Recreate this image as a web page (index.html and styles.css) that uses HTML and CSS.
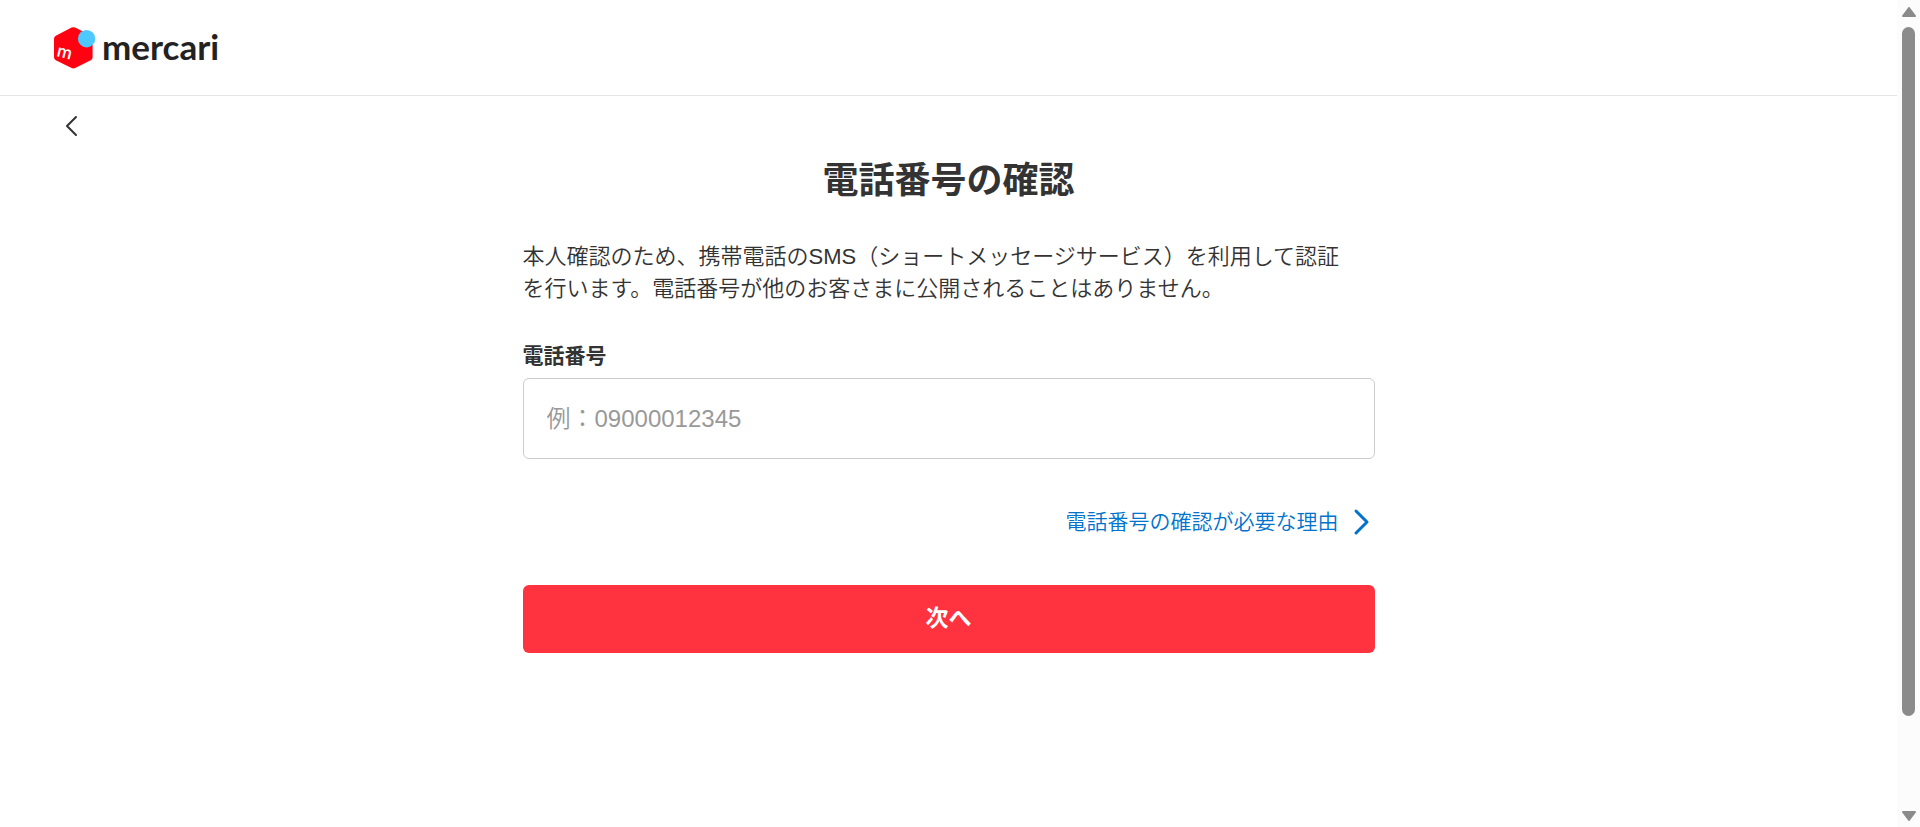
FILE: index.html
```html
<!DOCTYPE html>
<html lang="ja">
<head>
    <meta charset="UTF-8">
    <meta name="viewport" content="width=device-width, initial-scale=1.0">
    <title>電話番号の確認 - mercari</title>
    <link rel="stylesheet" href="styles.css">
</head>
<body>
    <div class="page">
        <header class="header">
            <a href="#" class="logo">
                <svg class="logo-mark" viewBox="0 0 42 42" aria-hidden="true">
                    <path fill="#ff0211" d="M17.6 0.6a4 4 0 0 1 3.6 0l15.6 8.2a3.2 3.2 0 0 1 1.8 2.9v18.6a3.2 3.2 0 0 1-1.8 2.9l-15.6 7.8a4 4 0 0 1-3.6 0L1.8 33.2A3.2 3.2 0 0 1 0 30.3V11.7a3.2 3.2 0 0 1 1.8-2.9z"/>
                    <circle cx="32.6" cy="11.7" r="8.7" fill="#4dc9ff"/>
                    <text class="logo-letter" x="2" y="29" transform="rotate(14 2 29)">m</text>
                </svg>
                <span class="logo-name">mercari</span>
            </a>
        </header>

        <nav class="back">
            <a href="#" class="back-link" aria-label="戻る">
                <svg class="back-icon" viewBox="0 0 24 24" aria-hidden="true">
                    <path d="M16 3L7 12l9 9"/>
                </svg>
            </a>
        </nav>

        <main class="content">
            <h1 class="title">電話番号の確認</h1>
            <p class="lead">本人確認のため、携帯電話のSMS（ショートメッセージサービス）を利用して認証<br>を行います。電話番号が他のお客さまに公開されることはありません。</p>
            <form class="form">
                <label class="label" for="phone">電話番号</label>
                <input class="input" id="phone" type="tel" placeholder="例：09000012345">
                <a href="#" class="reason">
                    電話番号の確認が必要な理由
                    <svg class="reason-icon" viewBox="0 0 28 28" aria-hidden="true">
                        <path d="M9 3l11 11L9 25"/>
                    </svg>
                </a>
                <button class="submit" type="button">次へ</button>
            </form>
        </main>
    </div>

    <div class="scrollbar" aria-hidden="true">
        <svg class="scroll-arrow" viewBox="0 0 14 10">
            <path d="M7 1L13 9H1z"/>
        </svg>
        <div class="scroll-track">
            <div class="scroll-thumb"></div>
        </div>
        <svg class="scroll-arrow" viewBox="0 0 14 10">
            <path d="M7 9L1 1h12z"/>
        </svg>
    </div>
</body>
</html>
```

FILE: styles.css
```css
* {
    margin: 0;
    padding: 0;
    box-sizing: border-box;
}

body {
    display: flex;
    min-height: 100vh;
    background: #fff;
    color: #333;
    font-family: "Liberation Sans", "Noto Sans CJK JP", sans-serif;
    font-weight: 350;
}

a {
    text-decoration: none;
}

.page {
    flex: 1;
    min-width: 0;
}

/* Header */
.header {
    display: flex;
    align-items: center;
    height: 96px;
    padding: 0 54px;
    border-bottom: 1px solid #e5e5e5;
}

.logo {
    display: flex;
    align-items: center;
    gap: 6px;
    color: #222;
}

.logo-mark {
    width: 42px;
    height: 42px;
}

.logo-letter {
    fill: #fff;
    font-family: Lato, sans-serif;
    font-size: 18px;
    font-weight: 600;
}

.logo-name {
    padding-bottom: 4px;
    font-family: Lato, sans-serif;
    font-size: 35px;
    font-weight: 700;
    line-height: 42px;
}

/* Back */
.back {
    display: flex;
    align-items: center;
    height: 60px;
    padding: 0 60px;
}

.back-icon {
    display: block;
    width: 24px;
    height: 24px;
}

.back-icon path,
.reason-icon path {
    fill: none;
    stroke: #333;
    stroke-width: 2;
    stroke-linecap: round;
    stroke-linejoin: round;
}

/* Content */
.content {
    width: 100%;
    max-width: 852px;
    margin: 0 auto;
}

.title {
    font-size: 36px;
    font-weight: 700;
    line-height: 50px;
    text-align: center;
}

.lead {
    margin-top: 35px;
    font-size: 22px;
    line-height: 32px;
}

.form {
    display: flex;
    flex-direction: column;
    margin-top: 37px;
}

.label {
    font-size: 21px;
    font-weight: 700;
    line-height: 28px;
}

.input {
    width: 100%;
    height: 81px;
    margin-top: 8px;
    padding: 0 23px;
    border: 1px solid #ccc;
    border-radius: 6px;
    background: #fff;
    color: #333;
    font: inherit;
    font-size: 24px;
}

.input::placeholder {
    color: #999;
}

.reason {
    display: flex;
    align-items: center;
    align-self: flex-end;
    gap: 8px;
    margin-top: 49px;
    color: #0073cc;
    font-size: 21px;
    line-height: 28px;
}

.reason-icon {
    width: 28px;
    height: 28px;
}

.reason-icon path {
    stroke: #0073cc;
    stroke-width: 3;
}

.submit {
    height: 68px;
    margin-top: 49px;
    padding-bottom: 6px;
    border: none;
    border-radius: 6px;
    background: #ff333f;
    color: #fff;
    font: inherit;
    font-size: 23px;
    font-weight: 700;
    cursor: pointer;
}

/* Scrollbar */
.scrollbar {
    position: sticky;
    top: 0;
    display: flex;
    flex-direction: column;
    align-items: center;
    gap: 10px;
    width: 23px;
    height: 100vh;
    padding: 7px 0 6px;
    background: #fcfcfc;
}

.scroll-arrow {
    width: 14px;
    height: 10px;
    fill: #8b8b8b;
    stroke: #8b8b8b;
    stroke-width: 2;
    stroke-linejoin: round;
}

.scroll-track {
    flex: 1;
}

.scroll-thumb {
    width: 13px;
    height: 89%;
    border-radius: 7px;
    background: #8b8b8b;
}
```
